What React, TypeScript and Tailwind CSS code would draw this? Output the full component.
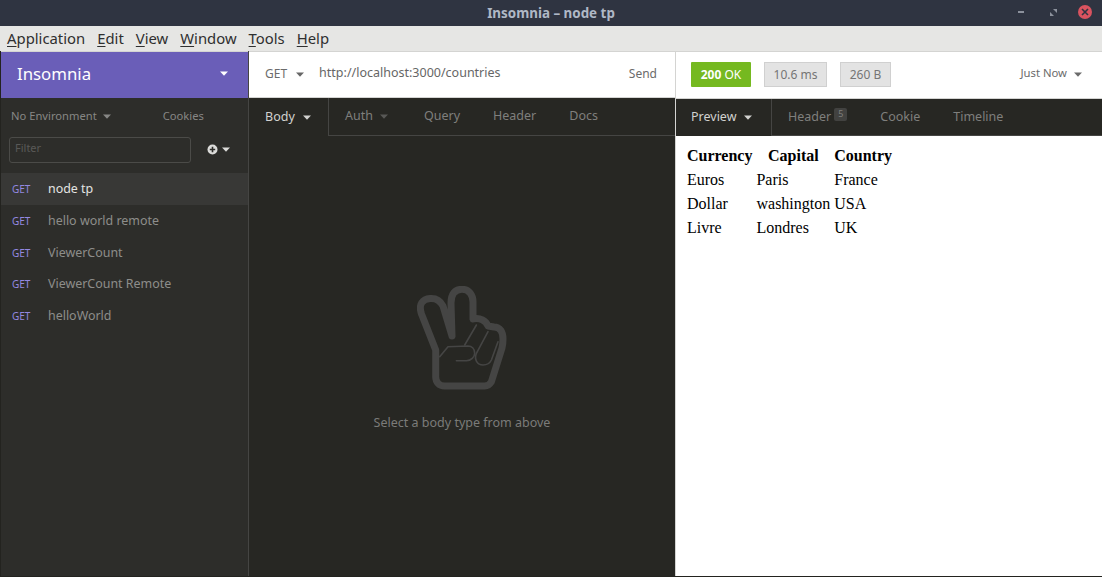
import React from "react";

const font = { fontFamily: '"Noto Sans", sans-serif' };

const Caret = ({ className }: { className?: string }) => (
  <svg width="8" height="5" viewBox="0 0 8 5" className={className}>
    <path d="M0 0.5h8L4 4.8z" fill="currentColor" />
  </svg>
);

const PeaceHand = () => (
  <svg width="90" height="104" viewBox="0 0 90 104" fill="none" stroke="#454544" strokeLinecap="round" strokeLinejoin="round">
    <path
      strokeWidth="7"
      d="M35 50 L26 20 C23 14 19 12 13 12.5 C6 13 1 18 4.5 28 L18.7 64 L18.7 90.7 C18.7 96 22 100 27.7 100 L67.7 100 C71 100 73 98 74.4 95.7 L85 62 C85.5 60 86 57 86 53 C86 46 83 41 77 41 L71 40 C69 35 63 31 56 33 L56 16 C56 9 52 3.3 45 3.3 C38 3.3 34 8 34 17 L35 50"
    />
    <path strokeWidth="1.6" d="M22.7 70.7 L31 60.7 L51 60 C55 60 57.7 63 57.7 67.3 C57.7 71 54 74.7 49.4 74.7 L39.4 74.7" />
    <path strokeWidth="1.6" d="M47.7 59 L59.4 39" />
    <path strokeWidth="1.6" d="M71 45.7 L59.4 67.3 C57 73 60 79 66 79 C70 79 73 77 74.4 74 L81 55.7" />
  </svg>
);

const requests = ["node tp", "hello world remote", "ViewerCount", "ViewerCount Remote", "helloWorld"];
const menus = [
  ["A", "pplication"],
  ["E", "dit"],
  ["V", "iew"],
  ["W", "indow"],
  ["T", "ools"],
  ["H", "elp"],
];

export default function App() {
  return (
    <div style={font} className="flex h-[577px] w-[1102px] flex-col overflow-hidden bg-[#2d2d2a] text-[12.5px]">
      {/* window title */}
      <div className="relative flex h-[26px] shrink-0 items-center justify-center bg-[#2f3441] text-[13.4px] font-bold text-[#afb8c6]">
        Insomnia – node tp
        <div className="absolute right-[10px] top-[5px] flex items-center">
          <div className="h-[2px] w-[6px] bg-[#8c919c]" />
          <svg width="7" height="7" viewBox="0 0 7 7" className="ml-[26px]">
            <path d="M3 0h4v4zM0 3l4 4H0z" fill="#8c919c" />
          </svg>
          <div className="ml-[21px] flex h-[14px] w-[14px] items-center justify-center rounded-full bg-[#d9535f]">
            <svg width="8" height="8" viewBox="0 0 8 8">
              <path d="M1 1l6 6M7 1l-6 6" stroke="#2f3441" strokeWidth="1.6" />
            </svg>
          </div>
        </div>
      </div>

      {/* menu bar */}
      <div className="flex h-[25px] shrink-0 items-center gap-[12px] bg-[#e6e6e4] pb-px pl-[7px] text-[14.85px] text-[#2f2f2f]">
        {menus.map(([first, rest]) => (
          <span key={first}>
            <span className="underline underline-offset-2">{first}</span>
            {rest}
          </span>
        ))}
      </div>

      <div className="flex min-h-0 flex-1 border-l border-[#23231f] border-b">
        {/* sidebar */}
        <div className="flex w-[248px] shrink-0 flex-col border-r border-[#454543]">
          <div className="flex h-[47px] shrink-0 items-center justify-between border-t border-[#d4d4d2] bg-[#6a5eb8] pb-[3px] pl-[16px] pr-[20px] text-white">
            <span className="text-[16.8px]">Insomnia</span>
            <Caret />
          </div>
          <div className="flex h-[38px] shrink-0 items-center pb-px pl-[10px] text-[11.2px] text-[#878785]">
            <span>No Environment</span>
            <Caret className="ml-[6px]" />
            <span className="ml-[52px]">Cookies</span>
          </div>
          <div className="flex h-[27px] shrink-0 items-center pl-[8px]">
            <div className="flex h-[26px] w-[182px] items-center rounded-[3px] border border-[#4b4b48] pb-[2px] pl-[5px] text-[11px] text-[#595957]">
              Filter
            </div>
            <div className="ml-[16px] flex items-center gap-[4px] text-[#dcdcda]">
              <svg width="11" height="11" viewBox="0 0 11 11">
                <circle cx="5.5" cy="5.5" r="5" fill="currentColor" />
                <path d="M5.5 2.8v5.4M2.8 5.5h5.4" stroke="#2d2d2a" strokeWidth="1.6" />
              </svg>
              <Caret />
            </div>
          </div>
          <div className="mt-[10.125px] flex flex-col">
            {requests.map((name, i) => (
              <div
                key={name}
                className={`flex h-[31.75px] items-center pl-[11px] text-[12.45px] leading-[18px] ${i === 0 ? "bg-[#383836] text-[#e4e4e2]" : "text-[#8d8d8b]"}`}
              >
                <span className="w-[36px] text-[10px] text-[#9388e0]">GET</span>
                {name}
              </div>
            ))}
          </div>
        </div>

        {/* request pane */}
        <div className="flex w-[427px] shrink-0 flex-col border-r border-[#d4d4d2] bg-[#272723]">
          <div className="flex h-[47px] shrink-0 items-center border-y border-[#d4d4d2] bg-white pb-px pl-[16px] pr-[18px] text-[12px] text-[#6b6b6b]">
            <span>GET</span>
            <Caret className="ml-[9px] text-[#666]" />
            <span className="mb-[2px] ml-[15px] text-[12.5px] text-[#666]">http://localhost:3000/countries</span>
            <span className="ml-auto">Send</span>
          </div>
          <div className="flex h-[38px] shrink-0 items-center text-[#7f7f7d]">
            <div className="flex h-full w-[80px] items-center gap-[8px] border-r border-[#454543] pl-[16px] text-[#d2d2d0]">
              Body
              <Caret />
            </div>
            <div className="flex h-full flex-1 items-center border-b border-[#454543]">
              <span className="ml-[16px]">Auth</span>
              <Caret className="ml-[7px] text-[#585856]" />
              <span className="ml-[36px]">Query</span>
              <span className="ml-[33px]">Header</span>
              <span className="ml-[33px]">Docs</span>
            </div>
          </div>
          <div className="flex flex-1 flex-col items-center pt-[150px]">
            <PeaceHand />
            <div className="mt-[24px] text-[#7b7b79]">Select a body type from above</div>
          </div>
        </div>

        {/* response pane */}
        <div className="flex min-w-0 flex-1 flex-col bg-white">
          <div className="flex h-[47px] shrink-0 items-center border-t border-[#d4d4d2] pb-px pl-[15px] pr-[20px] text-[12px] text-[#6b6b6b]">
            <div className="flex h-[25px] w-[60px] items-center justify-center rounded-[1px] bg-[#75b920] text-white">
              <b>200</b>&nbsp;OK
            </div>
            <div className="ml-[13px] flex h-[25px] w-[63px] items-center justify-center border border-[#d0d0d0] bg-[#e3e3e3] text-[#757575]">
              10.6 ms
            </div>
            <div className="ml-[13px] flex h-[25px] w-[51px] items-center justify-center border border-[#d0d0d0] bg-[#e3e3e3] text-[#757575]">
              260 B
            </div>
            <span className="mb-[2px] ml-auto text-[11.3px]">Just Now</span>
            <Caret className="ml-[7px]" />
          </div>
          <div className="flex h-[38px] shrink-0 items-center border-t border-[#d4d4d2] bg-[#272723] text-[#7f7f7d]">
            <div className="flex h-full w-[96px] items-center gap-[8px] border-r border-[#454543] pl-[15px] text-[#d2d2d0]">
              Preview
              <Caret />
            </div>
            <div className="flex h-full flex-1 items-center border-b border-[#454543]">
              <span className="ml-[16px]">Header</span>
              <span className="mb-[6px] ml-[3px] flex h-[13px] w-[13px] items-center justify-center rounded-[2px] bg-[#424240] text-[9px]">5</span>
              <span className="ml-[33px]">Cookie</span>
              <span className="ml-[33px]">Timeline</span>
            </div>
          </div>
          <table className="ml-[8px] mt-[7px] w-fit border-separate border-spacing-[2px] text-[16px] leading-[22px] text-black" style={{ fontFamily: '"Liberation Serif", serif' }}>
            <thead>
              <tr>
                <th className="px-px">Currency</th>
                <th className="px-px">Capital</th>
                <th className="px-px text-left">Country</th>
              </tr>
            </thead>
            <tbody>
              <tr><td className="px-px">Euros</td><td className="px-px">Paris</td><td className="px-px">France</td></tr>
              <tr><td className="px-px">Dollar</td><td className="px-px">washington</td><td className="px-px">USA</td></tr>
              <tr><td className="px-px">Livre</td><td className="px-px">Londres</td><td className="px-px">UK</td></tr>
            </tbody>
          </table>
        </div>
      </div>
    </div>
  );
}
